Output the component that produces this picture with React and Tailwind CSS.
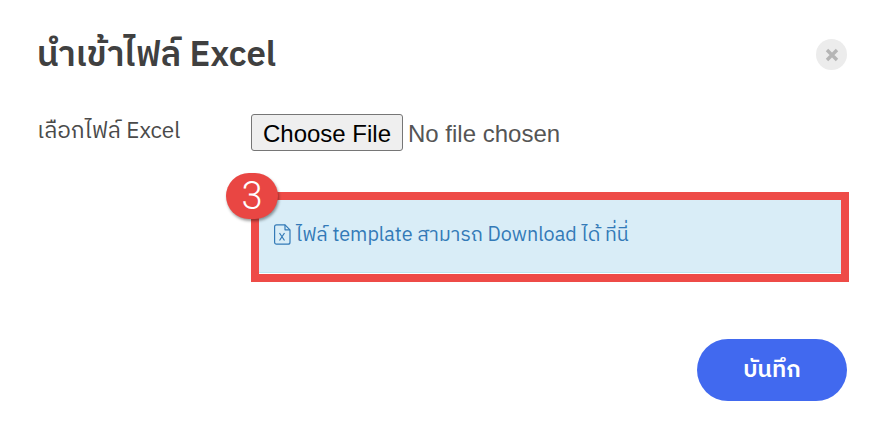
import React from 'react';

function ExcelFileIcon() {
  return (
    <svg width="17" height="21" viewBox="0 0 17 21" fill="none" stroke="currentColor" strokeWidth="1.2" strokeLinejoin="round" className="shrink-0 mt-[-4px]">
      <path d="M2.5 0.8H11L16 5.8V18.2C16 19.3 15.2 20.2 14 20.2H2.5C1.4 20.2 0.6 19.3 0.6 18.2V2.8C0.6 1.7 1.4 0.8 2.5 0.8Z" />
      <path d="M11 0.8V5.8H16" />
      <path d="M5.5 9L10.5 16.5M10.5 9L5.5 16.5" />
    </svg>
  );
}

export default function App() {
  return (
    <div className="w-[887px] h-[429px] bg-white overflow-hidden font-['IBM_Plex_Sans_Thai','Noto_Sans','Noto_Sans_Thai',sans-serif] text-[#444]">
      <div className="flex items-start justify-between pl-[37px] pr-[40px] pt-[34px]">
        <h1 className="text-[34.8px] leading-[44px] font-semibold text-[#404040]">นำเข้าไฟล์ Excel</h1>
        <button className="w-[31px] h-[31px] mt-[5px] rounded-full bg-[#ececec] flex items-center justify-center">
          <svg width="14" height="14" viewBox="0 0 14 14" stroke="#b5b5b5" strokeWidth="3.4">
            <path d="M2 2L12 12M12 2L2 12" />
          </svg>
        </button>
      </div>

      <div className="flex pl-[37px] pr-[38px] pt-[36px]">
        <label className="w-[214px] shrink-0 mt-[3px] text-[22.6px] leading-[30px] text-[#4a4a4a]">เลือกไฟล์ Excel</label>
        <div className="flex-1">
          <input
            type="file"
            className="block w-full h-[37px] text-[24px] leading-[37px] text-[#555] font-['Liberation_Sans',sans-serif] file:h-[37px] file:w-[152px] file:mr-[5px] file:px-0 file:pb-[4px] file:text-[24px] file:text-black file:bg-[#efefef] file:border file:border-solid file:border-[#767676] file:rounded-[3px]"
          />
          <div className="relative mt-[41px]">
            <div className="h-[90px] border-[8px] border-[#ee4b47] bg-white">
              <div className="h-[73px] bg-[#d9edf7] border-b border-[#bce8f1]">
                <div className="flex items-center gap-[5px] pl-[15px] pt-[23px] text-[#337ab7] text-[19.8px] leading-[26px]">
                  <ExcelFileIcon />
                  <span>ไฟล์ template สามารถ Download ได้ ที่นี่</span>
                </div>
              </div>
            </div>
            <div className="absolute left-[-25px] top-[-19px] w-[52px] h-[46px] rounded-full bg-[#e94643] shadow-[1px_2px_3px_rgba(0,0,0,0.4)] flex items-center justify-center text-white text-[38px] font-light font-['Roboto',sans-serif]">
              3
            </div>
          </div>
        </div>
      </div>

      <div className="flex justify-end pr-[40px] pt-[57px]">
        <button className="w-[150px] h-[62px] rounded-full bg-[#4169ef] text-white text-[23px] font-semibold">บันทึก</button>
      </div>
    </div>
  );
}
